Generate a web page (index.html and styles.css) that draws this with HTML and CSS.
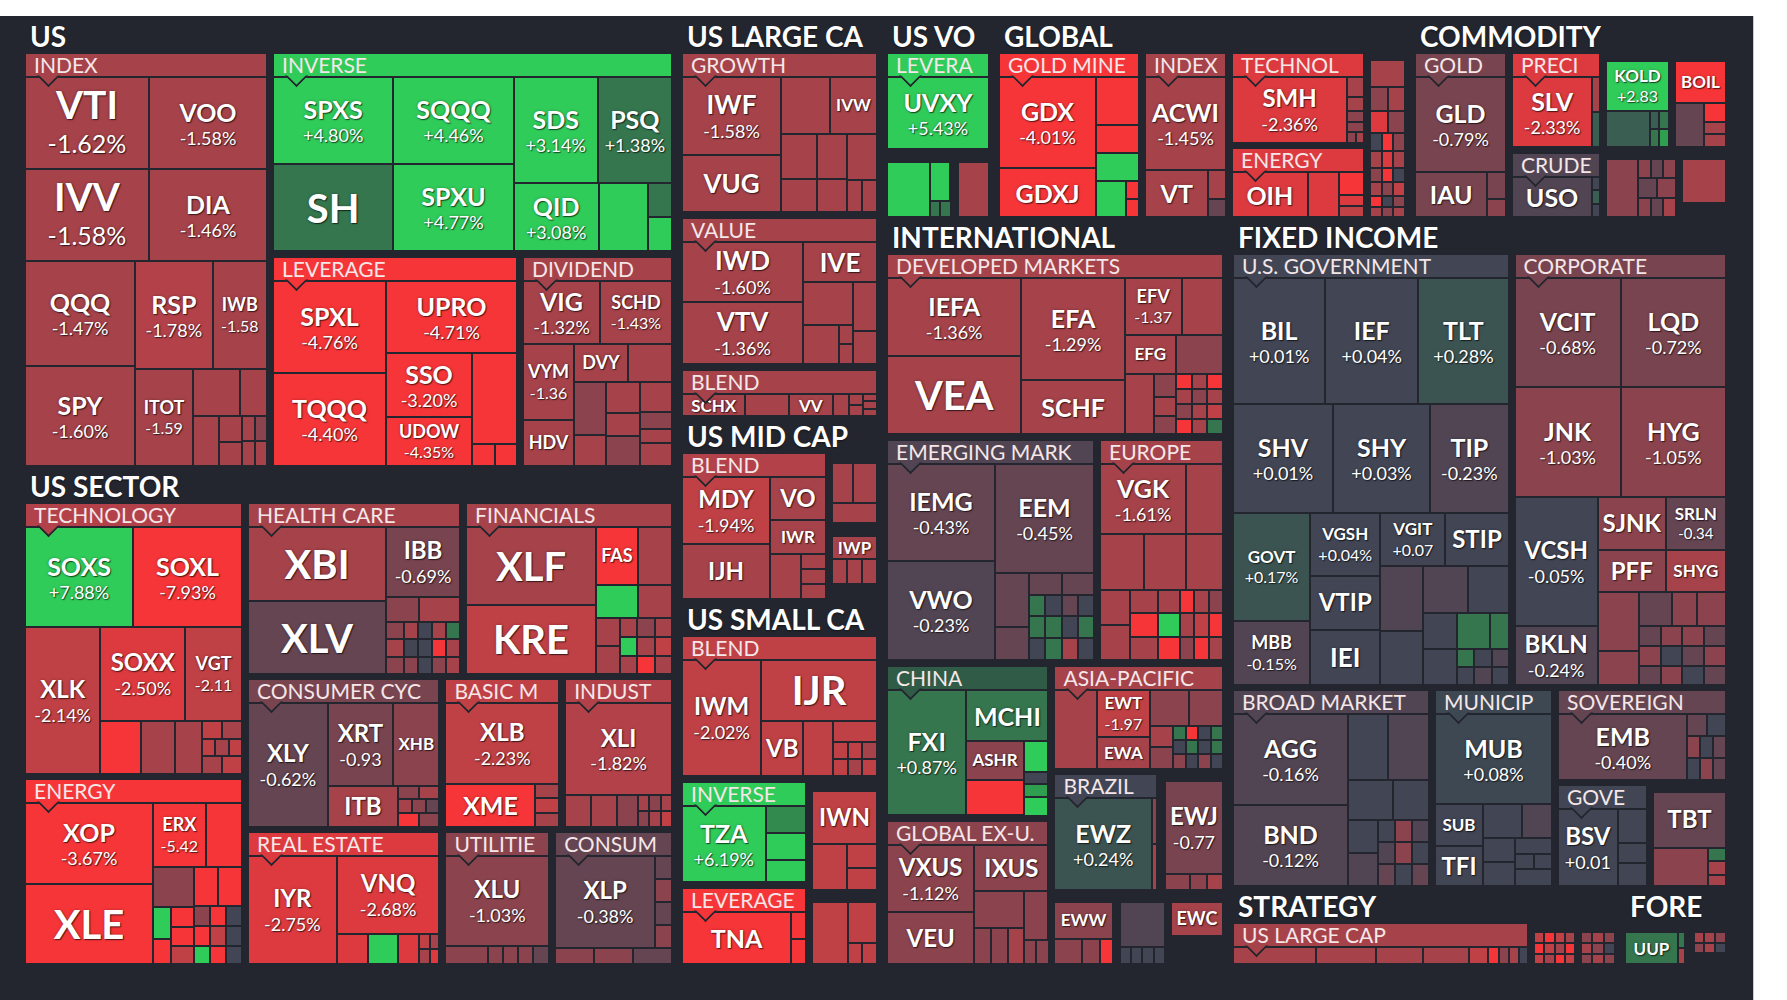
FILE: index.html
```html
<!DOCTYPE html>
<html><head><meta charset="utf-8"><title>ETF Map</title><link rel="stylesheet" href="styles.css"></head>
<body><div class="page"><div class="map">

<div class="col" style="flex:647">
 <div class="grp" style="flex:450">
  <div class="gt">US</div>
  <div class="row g6 fill">
   <div class="sg" style="flex:242">
    <div class="sh r3"><span>INDEX</span></div>
    <div class="col fill">
     <div class="row" style="flex:92"><div class="t r3 big" style="flex:124"><b>VTI</b><i>-1.62%</i></div><div class="t r3 m1" style="flex:118"><b>VOO</b><i>-1.58%</i></div></div>
     <div class="row" style="flex:92"><div class="t r3 big" style="flex:124"><b>IVV</b><i>-1.58%</i></div><div class="t r3 m1" style="flex:118"><b>DIA</b><i>-1.46%</i></div></div>
     <div class="row" style="flex:204">
      <div class="col" style="flex:110"><div class="t r3 m1" style="flex:104"><b>QQQ</b><i>-1.47%</i></div><div class="t r3 m1" style="flex:100"><b>SPY</b><i>-1.60%</i></div></div>
      <div class="col" style="flex:132">
       <div class="row" style="flex:107"><div class="t r35 m1" style="flex:78"><b>RSP</b><i>-1.78%</i></div><div class="t r3 s1" style="flex:54"><b>IWB</b><i>-1.58</i></div></div>
       <div class="row" style="flex:97"><div class="t r3 s1" style="flex:57"><b>ITOT</b><i>-1.59</i></div>
        <div class="col" style="flex:75">
         <div class="row" style="flex:47"><div class="t r3" style="flex:48"></div><div class="t r3" style="flex:27"></div></div>
         <div class="row" style="flex:50"><div class="t r3" style="flex:25"></div><div class="col" style="flex:24"><div class="t r3" style="flex:26"></div><div class="t r3" style="flex:24"></div></div><div class="col" style="flex:26"><div class="row" style="flex:1"><div class="t r3" style="flex:1"></div><div class="t r2" style="flex:1"></div></div><div class="row" style="flex:1"><div class="t r3" style="flex:1"></div><div class="t r3" style="flex:1"></div></div></div></div>
        </div>
       </div>
      </div>
     </div>
    </div>
   </div>
   <div class="col g6" style="flex:399">
    <div class="sg" style="flex:198">
     <div class="sh g3"><span>INVERSE</span></div>
     <div class="row fill">
      <div class="col" style="flex:240">
       <div class="row" style="flex:87"><div class="t g3 m1" style="flex:120"><b>SPXS</b><i>+4.80%</i></div><div class="t g3 m1" style="flex:120"><b>SQQQ</b><i>+4.46%</i></div></div>
       <div class="row" style="flex:87"><div class="t g1 huge" style="flex:120"><b>SH</b></div><div class="t g3 m1" style="flex:120"><b>SPXU</b><i>+4.77%</i></div></div>
      </div>
      <div class="col" style="flex:158">
       <div class="row" style="flex:106"><div class="t g3 m1" style="flex:84"><b>SDS</b><i>+3.14%</i></div><div class="t g1 m2" style="flex:74"><b>PSQ</b><i>+1.38%</i></div></div>
       <div class="row" style="flex:68"><div class="t g3 m1" style="flex:85"><b>QID</b><i>+3.08%</i></div><div class="t g3" style="flex:48"></div><div class="col" style="flex:25"><div class="t g1" style="flex:50"></div><div class="t g3" style="flex:50"></div></div></div>
      </div>
     </div>
    </div>
    <div class="row g6" style="flex:209">
     <div class="sg" style="flex:244">
      <div class="sh r6"><span>LEVERAGE</span></div>
      <div class="row fill">
       <div class="col" style="flex:113"><div class="t r6 m1" style="flex:92"><b>SPXL</b><i>-4.76%</i></div><div class="t r6 m1" style="flex:93"><b>TQQQ</b><i>-4.40%</i></div></div>
       <div class="col" style="flex:131">
        <div class="t r6 m1" style="flex:71"><b>UPRO</b><i>-4.71%</i></div>
        <div class="row" style="flex:114">
         <div class="col" style="flex:86"><div class="t r6 m2" style="flex:65"><b>SSO</b><i>-3.20%</i></div><div class="t r6 s1" style="flex:49"><b>UDOW</b><i>-4.35%</i></div></div>
         <div class="col" style="flex:45"><div class="t r6" style="flex:91"></div><div class="row" style="flex:23"><div class="t r6" style="flex:1"></div><div class="t r6" style="flex:1"></div></div></div>
        </div>
       </div>
      </div>
     </div>
     <div class="sg" style="flex:149">
      <div class="sh r3"><span>DIVIDEND</span></div>
      <div class="col fill">
       <div class="row" style="flex:63"><div class="t r3 m2" style="flex:77"><b>VIG</b><i>-1.32%</i></div><div class="t r3 s1" style="flex:72"><b>SCHD</b><i>-1.43%</i></div></div>
       <div class="row" style="flex:122">
        <div class="col" style="flex:51"><div class="t r3 s1" style="flex:76"><b>VYM</b><i>-1.36</i></div><div class="t r3 s1" style="flex:46"><b>HDV</b></div></div>
        <div class="col" style="flex:98">
         <div class="row" style="flex:38"><div class="t r3 s1" style="flex:54"><b>DVY</b></div><div class="t r3" style="flex:44"></div></div>
         <div class="row" style="flex:84">
          <div class="col" style="flex:32"><div class="t r2" style="flex:54"></div><div class="t r3" style="flex:30"></div></div>
          <div class="col" style="flex:34"><div class="t r3" style="flex:31"></div><div class="t r3" style="flex:23"></div><div class="t r2" style="flex:30"></div></div>
          <div class="col" style="flex:32"><div class="t r3" style="flex:31"></div><div class="t r2" style="flex:16"></div><div class="t r3" style="flex:14"></div><div class="t r3" style="flex:23"></div></div>
         </div>
        </div>
       </div>
      </div>
     </div>
    </div>
   </div>
  </div>
 </div>

 <div class="grp" style="flex:498">
  <div class="gt">US SECTOR</div>
  <div class="row g6 fill">
   <div class="col g5" style="flex:217">
    <div class="sg" style="flex:271">
     <div class="sh r35"><span>TECHNOLOGY</span></div>
     <div class="col fill">
      <div class="row" style="flex:100"><div class="t g3 m1" style="flex:108"><b>SOXS</b><i>+7.88%</i></div><div class="t r6 m1" style="flex:109"><b>SOXL</b><i>-7.93%</i></div></div>
      <div class="row" style="flex:146">
       <div class="t r4 m3" style="flex:74"><b>XLK</b><i>-2.14%</i></div>
       <div class="col" style="flex:143">
        <div class="row" style="flex:93"><div class="t r5 m3" style="flex:86"><b>SOXX</b><i>-2.50%</i></div><div class="t r4 s1" style="flex:57"><b>VGT</b><i>-2.11</i></div></div>
        <div class="row" style="flex:53"><div class="t r6" style="flex:41"></div><div class="t r3" style="flex:33"></div><div class="t r3" style="flex:27"></div>
         <div class="col" style="flex:42"><div class="row" style="flex:1"><div class="t r4" style="flex:1"></div><div class="t r3" style="flex:1"></div></div><div class="row" style="flex:1"><div class="t r4" style="flex:1"></div><div class="t r3" style="flex:1"></div><div class="t r4" style="flex:1"></div></div><div class="row" style="flex:1"><div class="t r3" style="flex:1"></div><div class="t r4" style="flex:1"></div></div></div>
        </div>
       </div>
      </div>
     </div>
    </div>
    <div class="sg" style="flex:185">
     <div class="sh r6"><span>ENERGY</span></div>
     <div class="row fill">
      <div class="col" style="flex:128"><div class="t r6 m1" style="flex:81"><b>XOP</b><i>-3.67%</i></div><div class="t r6 huge" style="flex:80"><b>XLE</b></div></div>
      <div class="col" style="flex:89">
       <div class="row" style="flex:64"><div class="t r6 s1" style="flex:53"><b>ERX</b><i>-5.42</i></div><div class="t r6" style="flex:36"></div></div>
       <div class="row" style="flex:97">
        <div class="col" style="flex:41"><div class="t r2" style="flex:39"></div><div class="row" style="flex:58"><div class="col" style="flex:18"><div class="t g3" style="flex:33"></div><div class="t r6" style="flex:25"></div></div><div class="col" style="flex:23"><div class="t r6" style="flex:20"></div><div class="t r6" style="flex:20"></div><div class="t r4" style="flex:18"></div></div></div></div>
        <div class="col" style="flex:48"><div class="row" style="flex:39"><div class="t r6" style="flex:1"></div><div class="t r6" style="flex:1"></div></div><div class="row" style="flex:20"><div class="t r2" style="flex:1"></div><div class="t r6" style="flex:1"></div><div class="t n" style="flex:1"></div></div><div class="row" style="flex:20"><div class="t r6" style="flex:1"></div><div class="t r4" style="flex:1"></div><div class="t n" style="flex:1"></div></div><div class="row" style="flex:18"><div class="t g3" style="flex:1"></div><div class="t r6" style="flex:1"></div><div class="t n" style="flex:1"></div></div></div>
       </div>
      </div>
     </div>
    </div>
   </div>
   <div class="col g5" style="flex:424">
    <div class="row g6" style="flex:171">
     <div class="sg" style="flex:212">
      <div class="sh r3"><span>HEALTH CARE</span></div>
      <div class="row fill">
       <div class="col" style="flex:138"><div class="t r3 huge" style="flex:73"><b>XBI</b></div><div class="t r1 huge" style="flex:73"><b>XLV</b></div></div>
       <div class="col" style="flex:74">
        <div class="t r15 m3" style="flex:68"><b>IBB</b><i>-0.69%</i></div>
        <div class="row" style="flex:25"><div class="t r2" style="flex:33"></div><div class="t r3" style="flex:41"></div></div>
        <div class="row" style="flex:53">
         <div class="col" style="flex:18"><div class="t r2" style="flex:1"></div><div class="t r3" style="flex:1"></div><div class="t r2" style="flex:1"></div></div>
         <div class="col" style="flex:28"><div class="row" style="flex:1"><div class="t r3" style="flex:1"></div><div class="t n" style="flex:1"></div></div><div class="row" style="flex:1"><div class="t n" style="flex:1"></div><div class="t n" style="flex:1"></div></div><div class="row" style="flex:1"><div class="t r2" style="flex:1"></div><div class="t n" style="flex:1"></div></div></div>
         <div class="col" style="flex:28"><div class="row" style="flex:1"><div class="t r3" style="flex:1"></div><div class="t g1" style="flex:1"></div></div><div class="row" style="flex:1"><div class="t r6" style="flex:1"></div><div class="t r3" style="flex:1"></div></div><div class="row" style="flex:1"><div class="t r2" style="flex:1"></div><div class="t r3" style="flex:1"></div></div></div>
        </div>
       </div>
      </div>
     </div>
     <div class="sg" style="flex:206">
      <div class="sh r3"><span>FINANCIALS</span></div>
      <div class="row fill">
       <div class="col" style="flex:130"><div class="t r3 huge" style="flex:77"><b>XLF</b></div><div class="t r4 huge" style="flex:69"><b>KRE</b></div></div>
       <div class="col" style="flex:76">
        <div class="row" style="flex:57"><div class="t r6 s1" style="flex:42"><b>FAS</b></div><div class="t r3" style="flex:34"></div></div>
        <div class="row" style="flex:33"><div class="t g3" style="flex:42"></div><div class="t r3" style="flex:34"></div></div>
        <div class="row" style="flex:56">
         <div class="col" style="flex:24"><div class="t r3" style="flex:1"></div><div class="t r3" style="flex:1"></div></div>
         <div class="col" style="flex:52"><div class="row" style="flex:1"><div class="t r3" style="flex:1"></div><div class="t r2" style="flex:1"></div><div class="t r3" style="flex:1"></div></div><div class="row" style="flex:1"><div class="t g3" style="flex:1"></div><div class="t r3" style="flex:1"></div><div class="t r4" style="flex:1"></div></div><div class="row" style="flex:1"><div class="t r3" style="flex:1"></div><div class="t r6" style="flex:1"></div><div class="t r3" style="flex:1"></div></div></div>
        </div>
       </div>
      </div>
     </div>
    </div>
    <div class="row g6" style="flex:147">
     <div class="sg" style="flex:190">
      <div class="sh r15"><span>CONSUMER CYC</span></div>
      <div class="row fill">
       <div class="t r1 m3" style="flex:78"><b>XLY</b><i>-0.62%</i></div>
       <div class="col" style="flex:112">
        <div class="row" style="flex:82"><div class="t r15 m3" style="flex:66"><b>XRT</b><i>-0.93</i></div><div class="t r2 s3" style="flex:46"><b>XHB</b></div></div>
        <div class="row" style="flex:41"><div class="t r3 m3" style="flex:70"><b>ITB</b></div><div class="col" style="flex:42"><div class="row" style="flex:1"><div class="t r2" style="flex:1"></div><div class="t r3" style="flex:1"></div></div><div class="row" style="flex:1"><div class="t r3" style="flex:1"></div><div class="t r2" style="flex:1"></div><div class="t r1" style="flex:1"></div></div><div class="row" style="flex:1"><div class="t r6" style="flex:1"></div><div class="t r2" style="flex:1"></div></div></div></div>
       </div>
      </div>
     </div>
     <div class="sg" style="flex:113">
      <div class="sh r4"><span>BASIC M</span></div>
      <div class="col fill">
       <div class="t r4 m3" style="flex:80"><b>XLB</b><i>-2.23%</i></div>
       <div class="row" style="flex:43"><div class="t r6 m2" style="flex:89"><b>XME</b></div><div class="col" style="flex:24"><div class="t r3" style="flex:1"></div><div class="t r4" style="flex:1"></div><div class="t r3" style="flex:1"></div></div></div>
      </div>
     </div>
     <div class="sg" style="flex:106">
      <div class="sh r35"><span>INDUST</span></div>
      <div class="col fill">
       <div class="t r35 m3" style="flex:91"><b>XLI</b><i>-1.82%</i></div>
       <div class="row" style="flex:32"><div class="t r3" style="flex:25"></div><div class="t r3" style="flex:25"></div><div class="t r2" style="flex:20"></div><div class="col" style="flex:36"><div class="row" style="flex:1"><div class="t r3" style="flex:1"></div><div class="t r2" style="flex:1"></div><div class="t r3" style="flex:1"></div></div><div class="row" style="flex:1"><div class="t r2" style="flex:1"></div><div class="t r3" style="flex:1"></div><div class="t r4" style="flex:1"></div></div></div></div>
      </div>
     </div>
    </div>
    <div class="row g6" style="flex:132">
     <div class="sg" style="flex:190">
      <div class="sh r5"><span>REAL ESTATE</span></div>
      <div class="row fill">
       <div class="t r5 m3" style="flex:87"><b>IYR</b><i>-2.75%</i></div>
       <div class="col" style="flex:103">
        <div class="t r5 m3" style="flex:78"><b>VNQ</b><i>-2.68%</i></div>
        <div class="row" style="flex:30"><div class="t r5" style="flex:31"></div><div class="t g3" style="flex:30"></div><div class="t r5" style="flex:20"></div><div class="col" style="flex:12"><div class="t r4" style="flex:1"></div><div class="t r3" style="flex:1"></div></div><div class="col" style="flex:10"><div class="t r3" style="flex:1"></div><div class="t r5" style="flex:1"></div></div></div>
       </div>
      </div>
     </div>
     <div class="sg" style="flex:103">
      <div class="sh r2"><span>UTILITIE</span></div>
      <div class="col fill">
       <div class="t r2 m3" style="flex:89"><b>XLU</b><i>-1.03%</i></div>
       <div class="row" style="flex:18"><div class="t r2" style="flex:45"></div><div class="t r2" style="flex:14"></div><div class="t r2" style="flex:14"></div><div class="t r2" style="flex:14"></div><div class="t r1" style="flex:16"></div></div>
      </div>
     </div>
     <div class="sg" style="flex:116">
      <div class="sh r1"><span>CONSUM</span></div>
      <div class="col fill">
       <div class="row" style="flex:91"><div class="t r1 m3" style="flex:99"><b>XLP</b><i>-0.38%</i></div><div class="col" style="flex:17"><div class="t r1" style="flex:1"></div><div class="t r2" style="flex:1"></div><div class="t r1" style="flex:1"></div><div class="t r2" style="flex:1"></div></div></div>
       <div class="row" style="flex:16"><div class="t r2" style="flex:1"></div><div class="t r2" style="flex:1"></div><div class="t r1" style="flex:1"></div></div>
      </div>
     </div>
    </div>
   </div>
  </div>
 </div>
</div>

<div class="col" style="flex:195">
 <div class="grp" style="flex:400">
  <div class="gt">US LARGE CA</div>
  <div class="col g6 fill">
   <div class="sg" style="flex:159">
    <div class="sh r3"><span>GROWTH</span></div>
    <div class="row fill">
     <div class="col" style="flex:99"><div class="t r3 m0" style="flex:78"><b>IWF</b><i>-1.58%</i></div><div class="t r3 m0" style="flex:57"><b>VUG</b></div></div>
     <div class="col" style="flex:96">
      <div class="row" style="flex:57"><div class="t r3" style="flex:49"></div><div class="t r3 s3" style="flex:47"><b>IVW</b></div></div>
      <div class="row" style="flex:78">
       <div class="col" style="flex:36"><div class="t r3" style="flex:45"></div><div class="t r3" style="flex:33"></div></div>
       <div class="col" style="flex:30"><div class="t r3" style="flex:45"></div><div class="t r3" style="flex:33"></div></div>
       <div class="col" style="flex:30"><div class="t r3" style="flex:45"></div><div class="row" style="flex:33"><div class="t r3" style="flex:1"></div><div class="t r3" style="flex:1"></div></div></div>
      </div>
     </div>
    </div>
   </div>
   <div class="sg" style="flex:146">
    <div class="sh r3"><span>VALUE</span></div>
    <div class="row fill">
     <div class="col" style="flex:121"><div class="t r3 m0" style="flex:60"><b>IWD</b><i>-1.60%</i></div><div class="t r3 m0" style="flex:62"><b>VTV</b><i>-1.36%</i></div></div>
     <div class="col" style="flex:74">
      <div class="t r3 m0" style="flex:39"><b>IVE</b></div>
      <div class="row" style="flex:83">
       <div class="col" style="flex:50"><div class="t r3" style="flex:42"></div><div class="row" style="flex:41"><div class="t r3" style="flex:35"></div><div class="col" style="flex:15"><div class="t r3" style="flex:1"></div><div class="t r3" style="flex:1"></div></div></div></div>
       <div class="col" style="flex:24"><div class="t r3" style="flex:50"></div><div class="t r3" style="flex:33"></div></div>
      </div>
     </div>
    </div>
   </div>
   <div class="sg" style="flex:46">
    <div class="sh r3"><span>BLEND</span></div>
    <div class="row fill">
     <div class="t r3 s2 lh1" style="flex:64"><b>SCHX</b></div>
     <div class="t r3" style="flex:43"></div>
     <div class="t r3 s2 lh1" style="flex:44"><b>VV</b></div>
     <div class="t r3" style="flex:15"></div>
     <div class="col" style="flex:14"><div class="t r3" style="flex:1"></div><div class="t r3" style="flex:1"></div></div>
     <div class="col" style="flex:15"><div class="t r3" style="flex:1"></div><div class="t r3" style="flex:1"></div><div class="t r3" style="flex:1"></div></div>
    </div>
   </div>
  </div>
 </div>
 <div class="grp" style="flex:183">
  <div class="gt">US MID CAP</div>
  <div class="row g6 fill">
   <div class="sg" style="flex:144">
    <div class="sh r35"><span>BLEND</span></div>
    <div class="row fill">
     <div class="col" style="flex:88"><div class="t r4 m3" style="flex:66"><b>MDY</b><i>-1.94%</i></div><div class="t r3 m3" style="flex:54"><b>IJH</b></div></div>
     <div class="col" style="flex:56"><div class="t r3 m3" style="flex:42"><b>VO</b></div><div class="t r3 s2" style="flex:32"><b>IWR</b></div>
      <div class="row" style="flex:46"><div class="t r3" style="flex:30"></div><div class="col" style="flex:26"><div class="t r3" style="flex:1"></div><div class="t r3" style="flex:1"></div><div class="t r3" style="flex:1"></div></div></div>
     </div>
    </div>
   </div>
   <div class="col" style="flex:45">
    <div class="sp" style="flex:10"></div>
    <div class="row" style="flex:41"><div class="t r3" style="flex:21"></div><div class="t r3" style="flex:24"></div></div>
    <div class="t r3" style="flex:19"></div>
    <div class="sp" style="flex:13"></div>
    <div class="t r3 s3 lh1" style="flex:22"><b>IWP</b></div>
    <div class="row" style="flex:26"><div class="t r3" style="flex:1"></div><div class="t r3" style="flex:1"></div><div class="t r3" style="flex:1"></div></div>
    <div class="sp" style="flex:15"></div>
   </div>
  </div>
 </div>
 <div class="grp" style="flex:365">
  <div class="gt">US SMALL CA</div>
  <div class="col g6 fill">
   <div class="sg" style="flex:140">
    <div class="sh r4"><span>BLEND</span></div>
    <div class="row fill">
     <div class="t r4 m3" style="flex:78"><b>IWM</b><i>-2.02%</i></div>
     <div class="col" style="flex:117">
      <div class="t r4 huge" style="flex:60"><b>IJR</b></div>
      <div class="row" style="flex:56"><div class="t r4 m3" style="flex:42"><b>VB</b></div><div class="t r4" style="flex:29"></div>
       <div class="col" style="flex:46"><div class="t r4" style="flex:20"></div><div class="row" style="flex:18"><div class="t r4" style="flex:1"></div><div class="t r4" style="flex:1"></div><div class="t r3" style="flex:1"></div></div><div class="row" style="flex:18"><div class="t r4" style="flex:1"></div><div class="t r3" style="flex:1"></div><div class="t r4" style="flex:1"></div></div></div>
      </div>
     </div>
    </div>
   </div>
   <div class="row g6" style="flex:182">
    <div class="col g6" style="flex:124">
     <div class="sg" style="flex:100">
      <div class="sh g3"><span>INVERSE</span></div>
      <div class="row fill"><div class="t g3 m1" style="flex:83"><b>TZA</b><i>+6.19%</i></div><div class="col" style="flex:41"><div class="t g15" style="flex:27"></div><div class="t g3" style="flex:27"></div><div class="t g3" style="flex:22"></div></div></div>
     </div>
     <div class="sg" style="flex:76">
      <div class="sh r6"><span>LEVERAGE</span></div>
      <div class="row fill"><div class="t r6 m1" style="flex:109"><b>TNA</b></div><div class="col" style="flex:15"><div class="t r6" style="flex:26"></div><div class="t r6" style="flex:24"></div></div></div>
     </div>
    </div>
    <div class="col" style="flex:65">
     <div class="sp" style="flex:9"></div>
     <div class="col" style="flex:99"><div class="t r4 m3" style="flex:52"><b>IWN</b></div><div class="row" style="flex:47"><div class="t r4" style="flex:34"></div><div class="col" style="flex:31"><div class="t r4" style="flex:25"></div><div class="t r4" style="flex:22"></div></div></div></div>
     <div class="sp" style="flex:12"></div>
     <div class="row" style="flex:62"><div class="t r4" style="flex:35"></div><div class="col" style="flex:30"><div class="t r4" style="flex:40"></div><div class="row" style="flex:22"><div class="t r4" style="flex:1"></div><div class="t r4" style="flex:1"></div></div></div></div>
    </div>
   </div>
  </div>
 </div>
</div>

<div class="col" style="flex:839">
 <div class="row g10" style="flex:201">
  <div class="grp" style="flex:102">
   <div class="gt">US VO</div>
   <div class="col fill">
    <div class="sg" style="flex:96"><div class="sh g3"><span>LEVERA</span></div><div class="t g3 m1 fill"><b>UVXY</b><i>+5.43%</i></div></div>
    <div class="sp" style="flex:13"></div>
    <div class="row" style="flex:55"><div class="t g3" style="flex:43"></div><div class="col" style="flex:21"><div class="t g3" style="flex:38"></div><div class="row" style="flex:17"><div class="t g1" style="flex:1"></div><div class="t g1" style="flex:1"></div></div></div><div class="sp" style="flex:8"></div><div class="t r3" style="flex:30"></div></div>
   </div>
  </div>
  <div class="grp" style="flex:406">
   <div class="gt">GLOBAL</div>
   <div class="row g6 fill">
    <div class="sg" style="flex:140">
     <div class="sh r6"><span>GOLD MINE</span></div>
     <div class="row fill">
      <div class="col" style="flex:97"><div class="t r6 m1" style="flex:92"><b>GDX</b><i>-4.01%</i></div><div class="t r6 m2" style="flex:48"><b>GDXJ</b></div></div>
      <div class="col" style="flex:43"><div class="t r6" style="flex:47"></div><div class="t r6" style="flex:27"></div><div class="t g3" style="flex:26"></div><div class="row" style="flex:37"><div class="t g3" style="flex:29"></div><div class="col" style="flex:14"><div class="t r6" style="flex:1"></div><div class="t r6" style="flex:1"></div></div></div></div>
     </div>
    </div>
    <div class="sg" style="flex:81">
     <div class="sh r3"><span>INDEX</span></div>
     <div class="col fill"><div class="t r3 m2" style="flex:92"><b>ACWI</b><i>-1.45%</i></div><div class="row" style="flex:48"><div class="t r3 m1" style="flex:63"><b>VT</b></div><div class="col" style="flex:18"><div class="t r3" style="flex:30"></div><div class="t r1" style="flex:18"></div></div></div></div>
    </div>
    <div class="col g5" style="flex:132">
     <div class="sg" style="flex:90">
      <div class="sh r5"><span>TECHNOL</span></div>
      <div class="row fill"><div class="t r5 m3" style="flex:115"><b>SMH</b><i>-2.36%</i></div><div class="col" style="flex:17"><div class="t r3" style="flex:20"></div><div class="t r3" style="flex:14"></div><div class="t r2" style="flex:10"></div><div class="t r2" style="flex:10"></div><div class="row" style="flex:12"><div class="t r2" style="flex:1"></div><div class="t r3" style="flex:1"></div></div></div></div>
     </div>
     <div class="sg" style="flex:69">
      <div class="sh r5"><span>ENERGY</span></div>
      <div class="row fill"><div class="t r5 m2" style="flex:76"><b>OIH</b></div><div class="t r5" style="flex:30"></div><div class="col" style="flex:26"><div class="t r6" style="flex:24"></div><div class="t r5" style="flex:11"></div><div class="t r4" style="flex:10"></div></div></div>
     </div>
    </div>
    <div class="col" style="flex:35">
     <div class="sp" style="flex:7"></div>
     <div class="t r3" style="flex:25"></div>
     <div class="row" style="flex:25"><div class="t r2" style="flex:1"></div><div class="t r3" style="flex:1"></div></div>
     <div class="row" style="flex:22"><div class="t r5" style="flex:1"></div><div class="t r2" style="flex:1"></div></div>
     <div class="row" style="flex:18"><div class="t n" style="flex:1"></div><div class="t r6" style="flex:1"></div><div class="t r2" style="flex:1"></div></div>
     <div class="row" style="flex:17"><div class="t r3" style="flex:1"></div><div class="t r5" style="flex:1"></div><div class="t r3" style="flex:1"></div></div>
     <div class="row" style="flex:15"><div class="t r2" style="flex:1"></div><div class="t r6" style="flex:1"></div><div class="t n" style="flex:1"></div></div>
     <div class="row" style="flex:14"><div class="t r3" style="flex:1"></div><div class="t r2" style="flex:1"></div><div class="t r4" style="flex:1"></div></div>
     <div class="row" style="flex:11"><div class="t r6" style="flex:1"></div><div class="t n" style="flex:1"></div><div class="t r2" style="flex:1"></div></div>
     <div class="row" style="flex:10"><div class="t r3" style="flex:1"></div><div class="t r2" style="flex:1"></div><div class="t r3" style="flex:1"></div></div>
    </div>
   </div>
  </div>
  <div class="grp" style="flex:311">
   <div class="gt">COMMODITY</div>
   <div class="row g6 fill">
    <div class="sg" style="flex:91">
     <div class="sh r15"><span>GOLD</span></div>
     <div class="col fill"><div class="t r15 m2" style="flex:94"><b>GLD</b><i>-0.79%</i></div><div class="row" style="flex:46"><div class="t r15 m2" style="flex:72"><b>IAU</b></div><div class="col" style="flex:19"><div class="t r15" style="flex:28"></div><div class="t r2" style="flex:18"></div></div></div></div>
    </div>
    <div class="col g6" style="flex:88">
     <div class="sg" style="flex:94">
      <div class="sh r5"><span>PRECI</span></div>
      <div class="row fill"><div class="t r5 m1" style="flex:80"><b>SLV</b><i>-2.33%</i></div><div class="col" style="flex:8"><div class="t r3" style="flex:1"></div><div class="t g05" style="flex:1"></div></div></div>
     </div>
     <div class="sg" style="flex:64">
      <div class="sh r0"><span>CRUDE</span></div>
      <div class="row fill"><div class="t r0 m2" style="flex:80"><b>USO</b></div><div class="col" style="flex:8"><div class="t n" style="flex:1"></div><div class="t g05" style="flex:1"></div><div class="t n" style="flex:1"></div></div></div>
     </div>
    </div>
    <div class="col" style="flex:120">
     <div class="sp" style="flex:8"></div>
     <div class="row g6" style="flex:86">
      <div class="col" style="flex:63"><div class="t g3 s2" style="flex:49"><b>KOLD</b><i>+2.83</i></div><div class="row" style="flex:37"><div class="t g05" style="flex:43"></div><div class="col" style="flex:20"><div class="row" style="flex:1"><div class="t g05" style="flex:1"></div><div class="t g1" style="flex:1"></div></div><div class="row" style="flex:1"><div class="t g1" style="flex:1"></div><div class="t g2" style="flex:1"></div></div></div></div></div>
      <div class="col" style="flex:51"><div class="t r6 s2" style="flex:41"><b>BOIL</b></div><div class="row" style="flex:45"><div class="t r1" style="flex:28"></div><div class="col" style="flex:23"><div class="t r6" style="flex:20"></div><div class="t r3" style="flex:12"></div><div class="t r3" style="flex:13"></div></div></div></div>
     </div>
     <div class="sp" style="flex:12"></div>
     <div class="row g6" style="flex:58">
      <div class="row" style="flex:70"><div class="t r2" style="flex:31"></div><div class="col" style="flex:39"><div class="row" style="flex:1"><div class="t r2" style="flex:1"></div><div class="t r1" style="flex:1"></div><div class="t r2" style="flex:1"></div></div><div class="row" style="flex:1"><div class="t r1" style="flex:1"></div><div class="t r2" style="flex:1"></div></div><div class="row" style="flex:1"><div class="t r2" style="flex:1"></div><div class="t r1" style="flex:1"></div><div class="t r3" style="flex:1"></div></div></div></div>
      <div class="col" style="flex:44"><div class="t r3" style="flex:43"></div><div class="sp" style="flex:15"></div></div>
     </div>
    </div>
   </div>
  </div>
 </div>

 <div class="row g10" style="flex:747">
  <div class="grp" style="flex:336">
   <div class="gt">INTERNATIONAL</div>
   <div class="col g6 fill">
    <div class="sg" style="flex:180">
     <div class="sh r3"><span>DEVELOPED MARKETS</span></div>
     <div class="row fill">
      <div class="col" style="flex:134"><div class="t r3 m1" style="flex:78"><b>IEFA</b><i>-1.36%</i></div><div class="t r3 huge" style="flex:77"><b>VEA</b></div></div>
      <div class="col" style="flex:103"><div class="t r3 m1" style="flex:102"><b>EFA</b><i>-1.29%</i></div><div class="t r3 m1" style="flex:53"><b>SCHF</b></div></div>
      <div class="col" style="flex:98">
       <div class="row" style="flex:57"><div class="t r3 s1" style="flex:57"><b>EFV</b><i>-1.37</i></div><div class="t r3" style="flex:41"></div></div>
       <div class="row" style="flex:38"><div class="t r3 s3" style="flex:51"><b>EFG</b></div><div class="t r2" style="flex:47"></div></div>
       <div class="row" style="flex:60"><div class="t r3" style="flex:28"></div><div class="col" style="flex:22"><div class="t r2" style="flex:24"></div><div class="t r3" style="flex:18"></div><div class="t r2" style="flex:18"></div></div>
        <div class="col" style="flex:48"><div class="row" style="flex:1"><div class="t r6" style="flex:1"></div><div class="t r3" style="flex:1"></div><div class="t r6" style="flex:1"></div></div><div class="row" style="flex:1"><div class="t r3" style="flex:1"></div><div class="t r2" style="flex:1"></div><div class="t r3" style="flex:1"></div></div><div class="row" style="flex:1"><div class="t r2" style="flex:1"></div><div class="t r3" style="flex:1"></div><div class="t r4" style="flex:1"></div></div><div class="row" style="flex:1"><div class="t r6" style="flex:1"></div><div class="t r3" style="flex:1"></div><div class="t g1" style="flex:1"></div></div></div>
       </div>
      </div>
     </div>
    </div>
    <div class="row g6" style="flex:220">
     <div class="sg" style="flex:207">
      <div class="sh r0"><span>EMERGING MARK</span></div>
      <div class="row fill">
       <div class="col" style="flex:108"><div class="t r1 m2" style="flex:97"><b>IEMG</b><i>-0.43%</i></div><div class="t r0 m2" style="flex:99"><b>VWO</b><i>-0.23%</i></div></div>
       <div class="col" style="flex:99"><div class="t r1 m1" style="flex:108"><b>EEM</b><i>-0.45%</i></div>
        <div class="row" style="flex:88"><div class="col" style="flex:34"><div class="t r1" style="flex:55"></div><div class="t r1" style="flex:33"></div></div>
         <div class="col" style="flex:65"><div class="row" style="flex:22"><div class="t r1" style="flex:1"></div><div class="t r1" style="flex:1"></div></div><div class="row" style="flex:22"><div class="t g1" style="flex:1"></div><div class="t n" style="flex:1"></div><div class="t r1" style="flex:1"></div><div class="t n" style="flex:1"></div></div><div class="row" style="flex:22"><div class="t g1" style="flex:1"></div><div class="t g1" style="flex:1"></div><div class="t n" style="flex:1"></div><div class="t g1" style="flex:1"></div></div><div class="row" style="flex:22"><div class="t n" style="flex:1"></div><div class="t g1" style="flex:1"></div><div class="t r3" style="flex:1"></div><div class="t n" style="flex:1"></div></div></div>
        </div>
       </div>
      </div>
     </div>
     <div class="sg" style="flex:123">
      <div class="sh r3"><span>EUROPE</span></div>
      <div class="col fill">
       <div class="row" style="flex:70"><div class="t r3 m2" style="flex:87"><b>VGK</b><i>-1.61%</i></div><div class="t r3" style="flex:36"></div></div>
       <div class="row" style="flex:56"><div class="t r3" style="flex:44"></div><div class="t r3" style="flex:42"></div><div class="t r3" style="flex:37"></div></div>
       <div class="row" style="flex:70">
        <div class="col" style="flex:30"><div class="t r3" style="flex:1"></div><div class="t r3" style="flex:1"></div></div>
        <div class="col" style="flex:28"><div class="t r3" style="flex:1"></div><div class="t r6" style="flex:1"></div><div class="t r3" style="flex:1"></div></div>
        <div class="col" style="flex:22"><div class="t r3" style="flex:1"></div><div class="t g3" style="flex:1"></div><div class="t r6" style="flex:1"></div></div>
        <div class="col" style="flex:43"><div class="row" style="flex:1"><div class="t r6" style="flex:1"></div><div class="t r3" style="flex:1"></div><div class="t r2" style="flex:1"></div></div><div class="row" style="flex:1"><div class="t r3" style="flex:1"></div><div class="t r4" style="flex:1"></div><div class="t r6" style="flex:1"></div></div><div class="row" style="flex:1"><div class="t r2" style="flex:1"></div><div class="t r6" style="flex:1"></div><div class="t r3" style="flex:1"></div></div></div>
       </div>
      </div>
     </div>
    </div>
    <div class="row g6" style="flex:298">
     <div class="col g6" style="flex:161">
      <div class="sg" style="flex:150">
       <div class="sh gc"><span>CHINA</span></div>
       <div class="row fill">
        <div class="t g1 m2" style="flex:78"><b>FXI</b><i>+0.87%</i></div>
        <div class="col" style="flex:83"><div class="t g1 m2" style="flex:50"><b>MCHI</b></div>
         <div class="row" style="flex:76"><div class="col" style="flex:58"><div class="t r2 s2" style="flex:40"><b>ASHR</b></div><div class="t r6" style="flex:36"></div></div><div class="col" style="flex:25"><div class="t g3" style="flex:33"></div><div class="t n" style="flex:12"></div><div class="t g2" style="flex:12"></div><div class="t g3" style="flex:19"></div></div></div>
        </div>
       </div>
      </div>
      <div class="sg" style="flex:143">
       <div class="sh r2"><span>GLOBAL EX-U.</span></div>
       <div class="row fill">
        <div class="col" style="flex:87"><div class="t r2 m3" style="flex:67"><b>VXUS</b><i>-1.12%</i></div><div class="t r2 m3" style="flex:52"><b>VEU</b></div></div>
        <div class="col" style="flex:74"><div class="t r2 m3" style="flex:44"><b>IXUS</b></div>
         <div class="row" style="flex:75"><div class="col" style="flex:50"><div class="t r2" style="flex:37"></div><div class="row" style="flex:38"><div class="t r2" style="flex:1"></div><div class="t r2" style="flex:1"></div><div class="t r3" style="flex:1"></div></div></div><div class="col" style="flex:24"><div class="t r2" style="flex:50"></div><div class="row" style="flex:25"><div class="t r2" style="flex:1"></div><div class="t r2" style="flex:1"></div></div></div></div>
        </div>
       </div>
      </div>
     </div>
     <div class="col" style="flex:168">
      <div class="sg" style="flex:103">
       <div class="sh r3"><span>ASIA-PACIFIC</span></div>
       <div class="row fill">
        <div class="t r3" style="flex:41"></div>
        <div class="col" style="flex:53"><div class="t r4 s2" style="flex:48"><b>EWT</b><i>-1.97</i></div><div class="t r3 s2" style="flex:31"><b>EWA</b></div></div>
        <div class="col" style="flex:74"><div class="row" style="flex:36"><div class="t r2" style="flex:40"></div><div class="t r2" style="flex:34"></div></div>
         <div class="row" style="flex:43"><div class="col" style="flex:24"><div class="t r3" style="flex:1"></div><div class="t r2" style="flex:1"></div></div><div class="col" style="flex:50"><div class="row" style="flex:1"><div class="t g1" style="flex:1"></div><div class="t r6" style="flex:1"></div><div class="t n" style="flex:1"></div><div class="t g1" style="flex:1"></div></div><div class="row" style="flex:1"><div class="t n" style="flex:1"></div><div class="t g1" style="flex:1"></div><div class="t n" style="flex:1"></div><div class="t g1" style="flex:1"></div></div><div class="row" style="flex:1"><div class="t r2" style="flex:1"></div><div class="t n" style="flex:1"></div><div class="t r2" style="flex:1"></div><div class="t n" style="flex:1"></div></div></div></div>
        </div>
       </div>
      </div>
      <div class="sp" style="flex:5"></div>
      <div class="row" style="flex:117">
       <div class="sg" style="flex:102">
        <div class="sh n"><span>BRAZIL</span></div>
        <div class="row fill"><div class="t g0 m1" style="flex:97"><b>EWZ</b><i>+0.24%</i></div><div class="col" style="flex:5"><div class="t r2" style="flex:1"></div><div class="t r3" style="flex:1"></div></div></div>
       </div>
       <div class="sp" style="flex:8"></div>
       <div class="col" style="flex:58"><div class="sp" style="flex:8"></div><div class="t r15 m3" style="flex:92"><b>EWJ</b><i>-0.77</i></div><div class="row" style="flex:17"><div class="t r2" style="flex:26"></div><div class="t r2" style="flex:16"></div><div class="t r3" style="flex:16"></div></div></div>
      </div>
      <div class="sp" style="flex:12"></div>
      <div class="row" style="flex:62">
       <div class="col" style="flex:58"><div class="t r2 s2" style="flex:36"><b>EWW</b></div><div class="row" style="flex:26"><div class="t r2" style="flex:28"></div><div class="t r2" style="flex:18"></div><div class="t r6" style="flex:12"></div></div></div>
       <div class="sp" style="flex:7"></div>
       <div class="col" style="flex:45"><div class="t r0" style="flex:44"></div><div class="row" style="flex:18"><div class="t n" style="flex:1"></div><div class="t n" style="flex:1"></div><div class="t n" style="flex:1"></div><div class="t n" style="flex:1"></div></div></div>
       <div class="sp" style="flex:6"></div>
       <div class="col" style="flex:52"><div class="t r3 s1" style="flex:33"><b>EWC</b></div><div class="sp" style="flex:29"></div></div>
      </div>
     </div>
    </div>
   </div>
  </div>

  <div class="col" style="flex:493">
   <div class="grp" style="flex:669">
    <div class="gt">FIXED INCOME</div>
    <div class="col g5 fill">
     <div class="row g6" style="flex:431">
      <div class="sg" style="flex:275">
       <div class="sh n"><span>U.S. GOVERNMENT</span></div>
       <div class="col fill">
        <div class="row" style="flex:126"><div class="t n m2" style="flex:92"><b>BIL</b><i>+0.01%</i></div><div class="t n m2" style="flex:93"><b>IEF</b><i>+0.04%</i></div><div class="t g0 m2" style="flex:90"><b>TLT</b><i>+0.28%</i></div></div>
        <div class="row" style="flex:109"><div class="t n m2" style="flex:100"><b>SHV</b><i>+0.01%</i></div><div class="t n m2" style="flex:97"><b>SHY</b><i>+0.03%</i></div><div class="t r0 m2" style="flex:78"><b>TIP</b><i>-0.23%</i></div></div>
        <div class="row" style="flex:172">
         <div class="col" style="flex:77"><div class="t g0 s2" style="flex:109"><b>GOVT</b><i>+0.17%</i></div><div class="t r0 s1" style="flex:63"><b>MBB</b><i>-0.15%</i></div></div>
         <div class="col" style="flex:70"><div class="t n s2" style="flex:63"><b>VGSH</b><i>+0.04%</i></div><div class="t n m3" style="flex:54"><b>VTIP</b></div><div class="t n m0" style="flex:55"><b>IEI</b></div></div>
         <div class="col" style="flex:128">
          <div class="row" style="flex:53"><div class="t n s2" style="flex:65"><b>VGIT</b><i>+0.07</i></div><div class="t n m3" style="flex:63"><b>STIP</b></div></div>
          <div class="row" style="flex:119">
           <div class="col" style="flex:43"><div class="t r0" style="flex:65"></div><div class="t n" style="flex:54"></div></div>
           <div class="col" style="flex:85"><div class="row" style="flex:47"><div class="t r0" style="flex:45"></div><div class="t n" style="flex:40"></div></div>
            <div class="row" style="flex:72"><div class="col" style="flex:34"><div class="t n" style="flex:1"></div><div class="t n" style="flex:1"></div></div>
             <div class="col" style="flex:51"><div class="row" style="flex:36"><div class="t g1" style="flex:33"></div><div class="t g1" style="flex:18"></div></div><div class="row" style="flex:18"><div class="t g1" style="flex:1"></div><div class="t n" style="flex:1"></div><div class="t r0" style="flex:1"></div></div><div class="row" style="flex:18"><div class="t n" style="flex:1"></div><div class="t r0" style="flex:1"></div><div class="t n" style="flex:1"></div></div></div>
            </div>
           </div>
          </div>
         </div>
        </div>
       </div>
      </div>
      <div class="sg" style="flex:211">
       <div class="sh r15"><span>CORPORATE</span></div>
       <div class="col fill">
        <div class="row" style="flex:109"><div class="t r15 m2" style="flex:106"><b>VCIT</b><i>-0.68%</i></div><div class="t r15 m2" style="flex:105"><b>LQD</b><i>-0.72%</i></div></div>
        <div class="row" style="flex:110"><div class="t r2 m2" style="flex:106"><b>JNK</b><i>-1.03%</i></div><div class="t r2 m2" style="flex:105"><b>HYG</b><i>-1.05%</i></div></div>
        <div class="row" style="flex:188">
         <div class="col" style="flex:83"><div class="t n m3" style="flex:130"><b>VCSH</b><i>-0.05%</i></div><div class="t r0 m3" style="flex:58"><b>BKLN</b><i>-0.24%</i></div></div>
         <div class="col" style="flex:128">
          <div class="row" style="flex:53"><div class="t r2 m3" style="flex:68"><b>SJNK</b></div><div class="t r1 s3" style="flex:60"><b>SRLN</b><i>-0.34</i></div></div>
          <div class="row" style="flex:42"><div class="t r2 m3" style="flex:68"><b>PFF</b></div><div class="t r3 s3" style="flex:60"><b>SHYG</b></div></div>
          <div class="row" style="flex:93"><div class="col" style="flex:41"><div class="t r2" style="flex:60"></div><div class="t r2" style="flex:33"></div></div>
           <div class="col" style="flex:87"><div class="row" style="flex:34"><div class="t r1" style="flex:33"></div><div class="t r2" style="flex:25"></div><div class="t r2" style="flex:29"></div></div>
            <div class="row" style="flex:20"><div class="t r1" style="flex:1"></div><div class="t r2" style="flex:1"></div><div class="t r2" style="flex:1"></div><div class="t r1" style="flex:1"></div></div>
            <div class="row" style="flex:20"><div class="t r2" style="flex:1"></div><div class="t n" style="flex:1"></div><div class="t r1" style="flex:1"></div><div class="t r2" style="flex:1"></div></div>
            <div class="row" style="flex:19"><div class="t r1" style="flex:1"></div><div class="t r2" style="flex:1"></div><div class="t n" style="flex:1"></div><div class="t r1" style="flex:1"></div></div></div>
          </div>
         </div>
        </div>
       </div>
      </div>
     </div>
     <div class="row g6" style="flex:196">
      <div class="sg" style="flex:196">
       <div class="sh r0"><span>BROAD MARKET</span></div>
       <div class="row fill">
        <div class="col" style="flex:115"><div class="t r0 m2" style="flex:91"><b>AGG</b><i>-0.16%</i></div><div class="t r0 m2" style="flex:81"><b>BND</b><i>-0.12%</i></div></div>
        <div class="col" style="flex:81"><div class="row" style="flex:66"><div class="t n" style="flex:40"></div><div class="t r0" style="flex:41"></div></div><div class="row" style="flex:40"><div class="t n" style="flex:45"></div><div class="t n" style="flex:36"></div></div>
         <div class="row" style="flex:66"><div class="col" style="flex:30"><div class="t n" style="flex:1"></div><div class="t r0" style="flex:1"></div></div><div class="col" style="flex:51"><div class="row" style="flex:1"><div class="t n" style="flex:1"></div><div class="t r2" style="flex:1"></div><div class="t r0" style="flex:1"></div></div><div class="row" style="flex:1"><div class="t r0" style="flex:1"></div><div class="t r2" style="flex:1"></div><div class="t n" style="flex:1"></div></div><div class="row" style="flex:1"><div class="t r1" style="flex:1"></div><div class="t n" style="flex:1"></div><div class="t r1" style="flex:1"></div></div></div></div>
        </div>
       </div>
      </div>
      <div class="sg" style="flex:117">
       <div class="sh ms"><span>MUNICIP</span></div>
       <div class="col fill"><div class="t ms m1" style="flex:89"><b>MUB</b><i>+0.08%</i></div>
        <div class="row" style="flex:83"><div class="col" style="flex:48"><div class="t n s3" style="flex:43"><b>SUB</b></div><div class="t n m3" style="flex:40"><b>TFI</b></div></div>
         <div class="col" style="flex:69"><div class="row" style="flex:34"><div class="t n" style="flex:39"></div><div class="t r0" style="flex:30"></div></div><div class="row" style="flex:49"><div class="col" style="flex:32"><div class="t n" style="flex:25"></div><div class="t n" style="flex:24"></div></div><div class="col" style="flex:37"><div class="t n" style="flex:1"></div><div class="row" style="flex:1"><div class="t n" style="flex:1"></div><div class="t n" style="flex:1"></div></div><div class="t n" style="flex:1"></div></div></div></div>
        </div>
       </div>
      </div>
      <div class="col" style="flex:168">
       <div class="sg" style="flex:90">
        <div class="sh r1"><span>SOVEREIGN</span></div>
        <div class="row fill"><div class="t r1 m2" style="flex:129"><b>EMB</b><i>-0.40%</i></div>
         <div class="col" style="flex:39"><div class="row" style="flex:1"><div class="t r1" style="flex:1"></div><div class="t n" style="flex:1"></div></div><div class="row" style="flex:1"><div class="t r2" style="flex:1"></div><div class="t n" style="flex:1"></div><div class="t r1" style="flex:1"></div></div><div class="row" style="flex:1"><div class="t n" style="flex:1"></div><div class="t r2" style="flex:1"></div><div class="t r1" style="flex:1"></div></div></div>
        </div>
       </div>
       <div class="sp" style="flex:5"></div>
       <div class="row" style="flex:101">
        <div class="sg" style="flex:89">
         <div class="sh n"><span>GOVE</span></div>
         <div class="row fill"><div class="t n m3" style="flex:59"><b>BSV</b><i>+0.01</i></div><div class="col" style="flex:30"><div class="t n" style="flex:34"></div><div class="t n" style="flex:20"></div><div class="t n" style="flex:22"></div></div></div>
        </div>
        <div class="sp" style="flex:6"></div>
        <div class="col" style="flex:73"><div class="sp" style="flex:7"></div><div class="t r1 m3" style="flex:55"><b>TBT</b></div><div class="row" style="flex:39"><div class="t r2" style="flex:54"></div><div class="col" style="flex:19"><div class="t g1" style="flex:14"></div><div class="t r3" style="flex:14"></div><div class="t r3" style="flex:11"></div></div></div></div>
       </div>
      </div>
     </div>
    </div>
   </div>
   <div class="row g10" style="flex:78">
    <div class="grp" style="flex:382">
     <div class="gt">STRATEGY</div>
     <div class="row fill">
      <div class="sg" style="flex:295">
       <div class="sh r3"><span>US LARGE CAP</span></div>
       <div class="row fill"><div class="t r3" style="flex:86"></div><div class="t r3" style="flex:62"></div><div class="t r3" style="flex:48"></div><div class="t r3" style="flex:47"></div><div class="t r4" style="flex:18"></div><div class="t r6" style="flex:10"></div><div class="t r2" style="flex:8"></div><div class="t r3" style="flex:8"></div><div class="t n" style="flex:8"></div></div>
      </div>
      <div class="sp" style="flex:6"></div>
      <div class="col" style="flex:41"><div class="sp" style="flex:9"></div><div class="row" style="flex:11"><div class="t r4" style="flex:1"></div><div class="t r6" style="flex:1"></div><div class="t r4" style="flex:1"></div><div class="t r3" style="flex:1"></div></div><div class="row" style="flex:11"><div class="t r6" style="flex:1"></div><div class="t r4" style="flex:1"></div><div class="t r3" style="flex:1"></div><div class="t r6" style="flex:1"></div></div><div class="row" style="flex:10"><div class="t r4" style="flex:1"></div><div class="t r3" style="flex:1"></div><div class="t r6" style="flex:1"></div><div class="t r4" style="flex:1"></div></div></div>
      <div class="sp" style="flex:6"></div>
      <div class="col" style="flex:34"><div class="sp" style="flex:9"></div><div class="row" style="flex:11"><div class="t r2" style="flex:1"></div><div class="t r3" style="flex:1"></div><div class="t r2" style="flex:1"></div></div><div class="row" style="flex:11"><div class="t r3" style="flex:1"></div><div class="t r2" style="flex:1"></div><div class="t n" style="flex:1"></div></div><div class="row" style="flex:10"><div class="t r2" style="flex:1"></div><div class="t r3" style="flex:1"></div><div class="t r2" style="flex:1"></div></div></div>
     </div>
    </div>
    <div class="grp" style="flex:101">
     <div class="gt">FORE</div>
     <div class="col fill"><div class="sp" style="flex:9"></div>
      <div class="row" style="flex:32"><div class="t g1 s2 lh1" style="flex:52"><b>UUP</b></div><div class="col" style="flex:7"><div class="t g1" style="flex:1"></div><div class="t r3" style="flex:1"></div></div><div class="sp" style="flex:9"></div><div class="col" style="flex:33"><div class="row" style="flex:1"><div class="t r3" style="flex:1"></div><div class="t r3" style="flex:1"></div><div class="t r2" style="flex:1"></div></div><div class="row" style="flex:1"><div class="t r2" style="flex:1"></div><div class="t r3" style="flex:1"></div><div class="t n" style="flex:1"></div></div><div class="sp" style="flex:1"></div></div></div>
     </div>
    </div>
   </div>
  </div>
 </div>
</div>

</div></div></body></html>
```

FILE: styles.css
```css
*{box-sizing:border-box;margin:0;padding:0}
html,body{background:#fff}
body{width:1787px;height:1000px;overflow:hidden;font-family:Lato,"Open Sans","Liberation Sans",sans-serif}
.page{margin-top:16px;width:1754px;height:984px;background:#23262e;border-right:1px solid #c9cacd;padding-left:25px}
.map{display:flex;gap:10px;width:1701px;height:948px}
.row,.col,.grp,.sg{display:flex;min-width:0;min-height:0}
.row{flex-direction:row}
.col,.grp,.sg{flex-direction:column}
.g5{gap:5px}
.g6{gap:6px}
.g10{gap:10px}
.fill{flex:1 1 0}
.sp{min-width:0;min-height:0}
.gt{flex:0 0 37px;height:37px;padding-left:5px;color:#fff;font-size:28px;font-weight:700;line-height:40px;white-space:nowrap;overflow:hidden;text-shadow:0 1px 2px rgba(0,0,0,.45)}
.sh{position:relative;z-index:2;flex:0 0 24px;height:24px;border:1px solid #23262e;padding-left:8px;color:#f5e7e8;font-size:21px;line-height:22px}
.sh span{display:block;white-space:nowrap}
.sh::after{content:"";position:absolute;left:14px;bottom:-8px;width:15px;height:15px;background:inherit;transform:rotate(45deg);border-right:2px solid #23262e;border-bottom:2px solid #23262e;clip-path:polygon(100% 0,100% 100%,0 100%)}
.t{display:flex;flex-direction:column;align-items:center;justify-content:center;min-width:0;min-height:0;overflow:hidden;border:1px solid #23262e;color:#fff;text-align:center;white-space:nowrap;text-shadow:1px 1px 1px rgba(0,0,0,.6),0 0 3px rgba(0,0,0,.3)}
.t b{display:block;font-weight:700;line-height:1.2}
.t i{display:block;font-style:normal;font-weight:400;line-height:1.25}
.lh1 b{line-height:1}
.huge b{font-size:40px}
.big{padding-bottom:6px}
.big b{font-size:39px}
.big i{font-size:25px}
.m0 b{font-size:26px}
.m0 i{font-size:18px}
.m1 b{font-size:25px}
.m1 i{font-size:18px}
.m2 b{font-size:25px}
.m2 i{font-size:18px}
.m3 b{font-size:24px}
.m3 i{font-size:18px}
.s1 b{font-size:18px}
.s1 i{font-size:16px}
.s2 b{font-size:17px}
.s2 i{font-size:16px}
.s3 b{font-size:17px}
.s3 i{font-size:15px}
.r6{background:#f63538}
.r5{background:#dc3a3f}
.r4{background:#bf4045}
.r35{background:#b2414a}
.r3{background:#a5424a}
.r2{background:#8b444e}
.r15{background:#78444f}
.r1{background:#644551}
.r0{background:#524553}
.n{background:#414554}
.g0{background:#3c5451}
.g05{background:#3a5e51}
.g1{background:#35764e}
.g15{background:#328a4e}
.g2{background:#2f9e4f}
.g3{background:#30cc5a}
.gc{background:#2f5b47}
.ms{background:#3d4852}
```
